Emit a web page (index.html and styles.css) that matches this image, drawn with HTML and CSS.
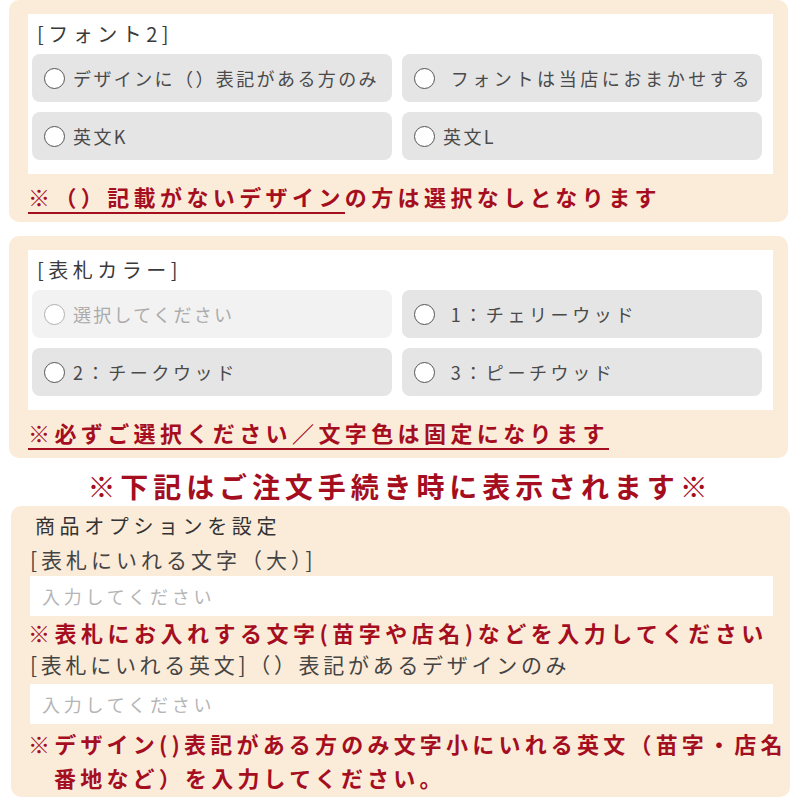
FILE: index.html
```html
<!DOCTYPE html>
<html lang="ja">
<head>
<meta charset="utf-8">
<link rel="stylesheet" href="styles.css">
</head>
<body>
<section class="panel">
  <div class="box">
    <div class="box-title">[フォント2]</div>
    <div class="options">
      <div class="opt"><span class="radio"></span><span class="opt-text">デザインに（）表記がある方のみ</span></div>
      <div class="opt"><span class="radio"></span><span class="opt-text opt-wide">&nbsp;フォントは当店におまかせする</span></div>
      <div class="opt"><span class="radio"></span><span class="opt-text">英文K</span></div>
      <div class="opt"><span class="radio"></span><span class="opt-text">英文L</span></div>
    </div>
  </div>
  <p class="note"><span class="ul">※（）記載がないデザイン</span>の方は選択なしとなります</p>
</section>

<section class="panel panel-2">
  <div class="box">
    <div class="box-title">[表札カラー]</div>
    <div class="options">
      <div class="opt opt-disabled"><span class="radio"></span><span class="opt-text opt-narrow">選択してください</span></div>
      <div class="opt"><span class="radio"></span><span class="opt-text opt-wide">&nbsp;1：チェリーウッド</span></div>
      <div class="opt"><span class="radio"></span><span class="opt-text opt-wide">2：チークウッド</span></div>
      <div class="opt"><span class="radio"></span><span class="opt-text opt-wide">&nbsp;3：ピーチウッド</span></div>
    </div>
  </div>
  <p class="note"><span class="ul">※必ずご選択ください／文字色は固定になります</span></p>
</section>

<h2 class="heading">※下記はご注文手続き時に表示されます※</h2>

<section class="panel-3">
  <div class="p3-title">商品オプションを設定</div>
  <div class="field-label">[表札にいれる文字（大）]</div>
  <div class="input"><span class="placeholder">入力してください</span></div>
  <p class="note3">※表札にお入れする文字(苗字や店名)などを入力してください</p>
  <div class="field-label field-label-2">[表札にいれる英文]（）表記があるデザインのみ</div>
  <div class="input"><span class="placeholder">入力してください</span></div>
  <p class="note4">※デザイン()表記がある方のみ文字小にいれる英文（苗字・店名<br>番地など）を入力してください。</p>
</section>
</body>
</html>
```

FILE: styles.css
```css
* { box-sizing: border-box; }

html, body {
  margin: 0;
  padding: 0;
  background: #ffffff;
}

body {
  width: 800px;
  font-family: "Noto Sans CJK JP", "Noto Sans", sans-serif;
  color: #444444;
}

.panel {
  background: #fbecda;
  border-radius: 10px;
  margin: 0 12px 0 9px;
  padding: 14px 15px 4px 19px;
}

.panel-2 {
  margin-top: 14px;
}

.box {
  background: #ffffff;
  padding: 0 11px 14px 4px;
}

.box-title {
  height: 40px;
  line-height: 40px;
  padding-left: 5px;
  font-size: 20px;
  letter-spacing: 4.5px;
  color: #3a3a3a;
}

.options {
  display: grid;
  grid-template-columns: 1fr 1fr;
  gap: 10px;
}

.opt {
  height: 48px;
  background: #e5e5e5;
  border-radius: 8px;
  display: flex;
  align-items: center;
  padding-left: 12px;
}

.radio {
  width: 21px;
  height: 21px;
  border-radius: 50%;
  border: 1.5px solid #555555;
  background: #ffffff;
  flex: none;
}

.opt-text {
  margin-left: 8px;
  font-size: 18px;
  letter-spacing: 2.4px;
  color: #4a4a4a;
  white-space: nowrap;
}

.opt-wide {
  letter-spacing: 3.6px;
}

.opt-narrow {
  letter-spacing: 2.3px;
}

.opt-disabled {
  background: #f2f2f2;
}

.opt-disabled .radio {
  border-color: #b0b0b0;
}

.opt-disabled .opt-text {
  color: #ababab;
}

.note {
  margin: 0 0 0 -1px;
  height: 44px;
  line-height: 44px;
  padding-left: 1px;
  font-size: 22px;
  font-weight: 700;
  letter-spacing: 4.4px;
  color: #a50e1f;
  white-space: nowrap;
}

.ul {
  border-bottom: 2px solid #a50e1f;
}

.heading {
  margin: 0;
  padding-top: 8px;
  height: 48px;
  line-height: 40px;
  text-align: center;
  font-size: 28px;
  font-weight: 700;
  letter-spacing: 4.9px;
  color: #a50e1f;
  white-space: nowrap;
}

.panel-3 {
  background: #fbecda;
  border-radius: 10px;
  margin: 0 10px 0 11px;
  padding: 4px 10px 3px 19px;
}

.p3-title {
  height: 32px;
  line-height: 32px;
  padding-left: 5px;
  font-size: 20px;
  letter-spacing: 4.6px;
  color: #333333;
}

.field-label {
  height: 34px;
  line-height: 34px;
  font-size: 21px;
  letter-spacing: 4px;
  color: #444444;
  white-space: nowrap;
}

.field-label-2 {
  height: 36px;
  line-height: 32px;
  letter-spacing: 3.7px;
}

.input {
  height: 40px;
  margin-right: 7px;
  background: #ffffff;
  display: flex;
  align-items: center;
  padding-left: 12px;
}

.placeholder {
  font-size: 18px;
  letter-spacing: 3.8px;
  color: #b5b5b5;
}

.note3 {
  margin: 0 0 0 -2px;
  height: 32px;
  line-height: 32px;
  font-size: 22px;
  font-weight: 700;
  letter-spacing: 4.5px;
  color: #a50e1f;
  white-space: nowrap;
}

.note4 {
  margin: 2px 0 0 -2px;
  line-height: 34px;
  font-size: 22px;
  font-weight: 700;
  letter-spacing: 4.2px;
  color: #a50e1f;
  white-space: nowrap;
  padding-left: 26px;
  text-indent: -26px;
}
```
